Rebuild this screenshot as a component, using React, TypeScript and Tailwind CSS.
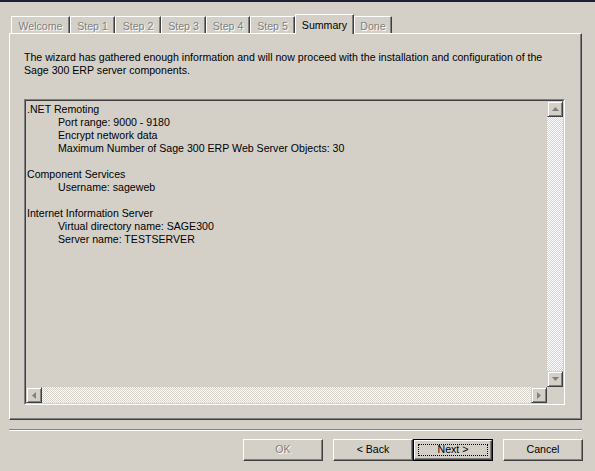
import React from 'react';

const tabs = [
  { label: 'Welcome', w: 'w-[59px]' },
  { label: 'Step 1', w: 'w-[45px]' },
  { label: 'Step 2', w: 'w-[46px]' },
  { label: 'Step 3', w: 'w-[45px]' },
  { label: 'Step 4', w: 'w-[44px]' },
  { label: 'Step 5', w: 'w-[45px]' },
  { label: 'Summary', w: 'w-[59px]', active: true },
  { label: 'Done', w: 'w-[38px]' },
];

const dim = 'text-[#808080] [text-shadow:1px_1px_0_#ffffff]';

const raised =
  'border border-t-white border-l-white border-r-[#404040] border-b-[#404040] shadow-[inset_-1px_-1px_0_#808080]';

const checker =
  'bg-[repeating-conic-gradient(#d4d0c8_0_25%,#ffffff_0_50%)] bg-[length:2px_2px]';

function Arrow({ dir }: { dir: 'up' | 'down' | 'left' | 'right' }) {
  const pts = {
    up: '0,4 3.5,0 7,4',
    down: '0,0 7,0 3.5,4',
    left: '4,0 4,7 0,3.5',
    right: '0,0 0,7 4,3.5',
  }[dir];
  const vert = dir === 'up' || dir === 'down';
  return (
    <svg width={vert ? 7 : 4} height={vert ? 4 : 7} viewBox={vert ? '0 0 7 4' : '0 0 4 7'}>
      <polygon points={pts} fill="#808080" />
    </svg>
  );
}

function SBtn({ dir }: { dir: 'up' | 'down' | 'left' | 'right' }) {
  return (
    <div className="w-[16px] h-[16px] bg-[#d4d0c8] border border-t-[#d4d0c8] border-l-[#d4d0c8] border-r-[#404040] border-b-[#404040] shadow-[inset_1px_1px_0_#ffffff,inset_-1px_-1px_0_#808080] flex items-center justify-center shrink-0">
      <Arrow dir={dir} />
    </div>
  );
}

function Button({ label, disabled, primary }: { label: string; disabled?: boolean; primary?: boolean }) {
  if (primary) {
    return (
      <div className="w-[80px] h-[22px] border border-black">
        <div className={`w-full h-full ${raised} p-[3px]`}>
          <div className="w-full h-full border border-dotted border-black flex items-center justify-center pb-px">
            {label}
          </div>
        </div>
      </div>
    );
  }
  return (
    <div className={`w-[80px] h-[22px] ${raised} flex items-center justify-center pb-px ${disabled ? dim : ''}`}>
      {label}
    </div>
  );
}

export default function App() {
  return (
    <div className="w-[595px] h-[471px] bg-[#d4d0c8] border-t-2 border-[#1c1f33] font-['Liberation_Sans',Arial,sans-serif] text-[10.6px] leading-[13px] text-black overflow-hidden">
      {/* Tabs */}
      <div className="flex items-end h-[19px] mt-[12px] pl-[11px]">
        {tabs.map((t) =>
          t.active ? (
            <div
              key={t.label}
              className={`${t.w} h-[20px] -mb-px relative z-10 bg-[#d4d0c8] border-t border-l border-t-white border-l-white border-r border-r-[#404040] shadow-[inset_-1px_0_0_#808080] text-center pt-[4px] whitespace-nowrap`}
            >
              {t.label}
            </div>
          ) : (
            <div
              key={t.label}
              className={`${t.w} h-[17px] border-t border-l border-t-white border-l-white border-r border-r-[#404040] shadow-[inset_-1px_0_0_#808080] text-center pt-[3px] whitespace-nowrap ${dim}`}
            >
              {t.label}
            </div>
          )
        )}
      </div>

      {/* Panel */}
      <div className={`ml-[9px] w-[573px] h-[387px] ${raised} pl-[14px] pt-[17px]`}>
        <p className="whitespace-nowrap">
          The wizard has gathered enough information and will now proceed with the installation and configuration of the
          <br />
          Sage 300 ERP server components.
        </p>

        <div className="mt-[22px] w-[541px] h-[306px] border border-t-[#808080] border-l-[#808080] border-r-white border-b-white">
          <div className="w-full h-full border border-t-[#404040] border-l-[#404040] border-r-[#d4d0c8] border-b-[#d4d0c8] flex flex-col">
            <div className="flex flex-1 min-h-0">
              <div className="flex-1 pt-[2px] pl-[1px] overflow-hidden whitespace-nowrap">
                <div>.NET Remoting</div>
                <div className="pl-[31px]">Port range: 9000 - 9180</div>
                <div className="pl-[31px]">Encrypt network data</div>
                <div className="pl-[31px]">Maximum Number of Sage 300 ERP Web Server Objects: 30</div>
                <div className="h-[13px]" />
                <div>Component Services</div>
                <div className="pl-[31px]">Username: sageweb</div>
                <div className="h-[13px]" />
                <div>Internet Information Server</div>
                <div className="pl-[31px]">Virtual directory name: SAGE300</div>
                <div className="pl-[31px]">Server name: TESTSERVER</div>
              </div>
              <div className="w-[16px] flex flex-col">
                <SBtn dir="up" />
                <div className={`flex-1 ${checker}`} />
                <SBtn dir="down" />
              </div>
            </div>
            <div className="flex h-[16px]">
              <SBtn dir="left" />
              <div className={`flex-1 ${checker}`} />
              <SBtn dir="right" />
              <div className="w-[16px]" />
            </div>
          </div>
        </div>
      </div>

      {/* Separator */}
      <div className="ml-[9px] w-[573px] mt-[9px] border-t border-t-[#808080] border-b border-b-white" />

      {/* Buttons */}
      <div className="flex justify-end mt-[8px] pr-[12px]">
        <Button label="OK" disabled />
        <div className="w-[10px]" />
        <Button label="< Back" />
        <Button label="Next >" primary />
        <div className="w-[10px]" />
        <Button label="Cancel" />
      </div>
    </div>
  );
}
